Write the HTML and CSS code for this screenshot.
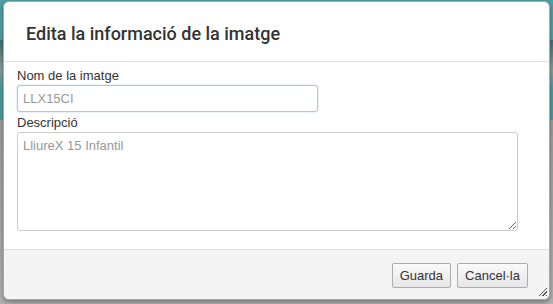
FILE: index.html
```html
<!DOCTYPE html>
<html lang="ca">
<head>
    <meta charset="UTF-8">
    <title>Edita la informació de la imatge</title>
    <link rel="stylesheet" href="styles.css">
</head>
<body>

    <div class="dialog">
        <div class="dialog-header">
            <h3>Edita la informació de la imatge</h3>
        </div>

        <div class="dialog-body">
            <label for="nom">Nom de la imatge</label>
            <input id="nom" class="field name-field" type="text" placeholder="LLX15CI">

            <label for="desc">Descripció</label>
            <textarea id="desc" class="field desc-field" placeholder="LliureX 15 Infantil"></textarea>
        </div>

        <div class="dialog-footer">
            <button class="btn">Guarda</button>
            <button class="btn">Cancel·la</button>
            <span class="grip"></span>
        </div>
    </div>

</body>
</html>
```

FILE: styles.css
```css
body {
    margin: 0;
    height: 304px;
    overflow: hidden;
    font-family: "Liberation Sans", Arial, sans-serif;
    background: linear-gradient(#4f9ea3 0, #4f9ea3 40px, #3f6f72 40px, #8a9a9b 70px, #4b9a9e 90px, #4b9a9e 120px, #9a9a9a 120px, #b0b0b0 304px);
}

.dialog {
    margin: 1px 3px 0 3px;
    height: 297px;
    background-color: white;
    border: 1px solid #a9a9a9;
    border-radius: 6px;
    box-shadow: 0 2px 4px rgba(0, 0, 0, 0.35);
    display: flex;
    flex-direction: column;
    overflow: hidden;
}

.dialog-header {
    height: 59px;
    padding-left: 22px;
    border-bottom: 1px solid #e0e0e0;
    display: flex;
    align-items: center;
}

.dialog-header h3 {
    margin: 0;
    font-family: Roboto, "Liberation Sans", sans-serif;
    font-size: 18px;
    font-weight: 500;
    color: #333;
    padding-top: 4px;
}

.dialog-body {
    flex: 1;
    padding: 6px 0 0 13px;
    display: flex;
    flex-direction: column;
    align-items: flex-start;
}

.dialog-body label {
    font-size: 13px;
    color: #333;
    line-height: 15px;
    margin-bottom: 2px;
}

.field {
    box-sizing: border-box;
    font-family: "Liberation Sans", Arial, sans-serif;
    font-size: 13px;
    color: #555;
    border: 1px solid #ccc;
    border-radius: 3px;
    padding: 4px 5px;
    margin: 0;
    outline: none;
}

.field::placeholder {
    color: #999;
}

.name-field {
    width: 301px;
    height: 27px;
    margin-bottom: 3px;
    border-color: #a9c7e8;
    box-shadow: 0 0 2px rgba(102, 150, 220, 0.45);
}

.desc-field {
    width: 501px;
    height: 99px;
    resize: both;
    padding-top: 5px;
}

.dialog-footer {
    position: relative;
    height: 50px;
    border-top: 1px solid #e0e0e0;
    background-color: #f4f4f4;
    display: flex;
    justify-content: flex-end;
    align-items: flex-start;
    gap: 6px;
    padding: 13px 21px 0 0;
    box-sizing: border-box;
}

.btn {
    font-family: "Liberation Sans", Arial, sans-serif;
    font-size: 13px;
    color: #333;
    height: 25px;
    padding: 0 7px;
    background: linear-gradient(#fafafa, #e6e6e6);
    border: 1px solid #adadad;
    border-radius: 2px;
}

.grip {
    position: absolute;
    right: 2px;
    bottom: 3px;
    width: 9px;
    height: 9px;
    background: repeating-linear-gradient(135deg, transparent 0, transparent 1.5px, #555 1.5px, #555 2.5px);
    clip-path: polygon(100% 0, 100% 100%, 0 100%);
}
```
